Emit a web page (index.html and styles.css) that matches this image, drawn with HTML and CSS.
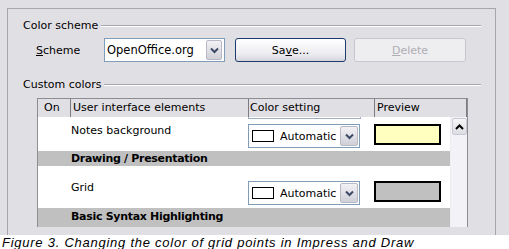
FILE: index.html
```html
<!DOCTYPE html>
<html lang="en">
<head>
  <meta charset="UTF-8" />
  <title>Options - Appearance</title>
  <link rel="stylesheet" href="styles.css">
</head>
<body>

  <div class="dialog">
    <div class="frame">

      <!-- Color scheme -->
      <div class="legend"><span>Color scheme</span><span class="rule"></span></div>
      <div class="scheme-row">
        <label class="lbl"><u>S</u>cheme</label>
        <div class="combo">
          <span class="combo-text">OpenOffice.org</span>
          <span class="drop">
            <svg width="11" height="7" viewBox="0 0 11 7"><polyline points="2,1.5 5.5,5 9,1.5" fill="none" stroke="#3c4a66" stroke-width="2"/></svg>
          </span>
        </div>
        <button class="btn">Sa<u>v</u>e...</button>
        <button class="btn disabled"><u>D</u>elete</button>
      </div>

      <!-- Custom colors -->
      <div class="legend"><span>Custom colors</span><span class="rule"></span></div>
      <div class="table">
        <div class="thead">
          <div class="th th-on">On</div>
          <div class="th th-name">User interface elements</div>
          <div class="th th-color">Color setting</div>
          <div class="th th-preview">Preview</div>
        </div>
        <div class="tbody">
          <div class="rows">
            <div class="peek"><span></span></div>

            <div class="row first">
              <div></div>
              <div class="name">Notes background</div>
              <div class="colorbox">
                <span class="swatch"></span>
                <span class="auto">Automatic</span>
                <span class="drop small">
                  <svg width="11" height="7" viewBox="0 0 11 7"><polyline points="2,1.5 5.5,5 9,1.5" fill="none" stroke="#3c4a66" stroke-width="2"/></svg>
                </span>
              </div>
              <div class="preview yellow"></div>
            </div>

            <div class="section">Drawing / Presentation</div>

            <div class="row">
              <div></div>
              <div class="name">Grid</div>
              <div class="colorbox">
                <span class="swatch"></span>
                <span class="auto">Automatic</span>
                <span class="drop small">
                  <svg width="11" height="7" viewBox="0 0 11 7"><polyline points="2,1.5 5.5,5 9,1.5" fill="none" stroke="#3c4a66" stroke-width="2"/></svg>
                </span>
              </div>
              <div class="preview grey"></div>
            </div>

            <div class="section tall">Basic Syntax Highlighting</div>
          </div>

          <div class="scrollbar">
            <div class="sb-up">
              <svg width="9" height="6" viewBox="0 0 9 6"><polyline points="1,5 4.5,1.5 8,5" fill="none" stroke="#000" stroke-width="2"/></svg>
            </div>
          </div>
        </div>
      </div>

    </div>
  </div>

  <p class="caption">Figure 3. Changing the color of grid points in Impress and Draw</p>

</body>
</html>
```

FILE: styles.css
```css
body {
  margin: 0;
  background: white;
  font-family: "DejaVu Sans", sans-serif;
  font-size: 11px;
  color: #000;
}

.dialog {
  height: 227px;
  background: #e0dfe3;
  padding: 8px 13px 0 7px;
  overflow: hidden;
}

.frame {
  border: 1px solid #a7a6aa;
  border-bottom: none;
  height: 240px;
  padding: 0 14px 0 15px;
}

.legend {
  display: flex;
  align-items: center;
  gap: 3px;
  height: 14px;
  line-height: 14px;
  margin-top: 10px;
}

.legend .rule {
  flex: 1;
  border-top: 1px solid #a7a6aa;
  border-bottom: 1px solid #fff;
  margin-top: -1px;
}

.scheme-row {
  display: flex;
  align-items: center;
  height: 24px;
  margin-top: 5px;
  margin-bottom: 16px;
}

.lbl {
  width: 68px;
  margin-left: 13px;
}

.combo {
  box-sizing: border-box;
  width: 121px;
  height: 24px;
  border: 1px solid #7f9db9;
  background: white;
  display: flex;
  align-items: center;
  padding: 0 2px 0 2px;
}

.combo-text {
  flex: 1;
  font-size: 11.5px;
}

.drop {
  box-sizing: border-box;
  width: 16px;
  height: 20px;
  border: 1px solid #b9b8c6;
  border-radius: 2px;
  background: linear-gradient(#f2f2f5, #cfcfd8);
  display: flex;
  align-items: center;
  justify-content: center;
}

.btn {
  box-sizing: border-box;
  height: 24px;
  width: 111px;
  margin-left: 10px;
  border: 1px solid #1c3a6e;
  border-radius: 3px;
  background: linear-gradient(#ffffff, #ecebf0 70%, #d6d5dd);
  font-family: "DejaVu Sans", sans-serif;
  font-size: 11px;
  color: #000;
  padding: 0;
}

.btn.disabled {
  width: 112px;
  margin-left: 8px;
  border-color: #c9c8d0;
  background: #eeedf0;
  color: #aeadb5;
}

.table {
  box-sizing: border-box;
  width: 431px;
  margin: 6px 0 0 14px;
  border: 1px solid #8d8c92;
  border-bottom: none;
}

.thead {
  display: flex;
  height: 18px;
  line-height: 18px;
  background: #e0dfe3;
}

.th {
  box-sizing: border-box;
  border-right: 1px solid #7c7b80;
  white-space: nowrap;
}

.th-on { width: 33px; padding-left: 6px; }
.th-name { width: 178px; padding-left: 2px; }
.th-color { width: 126px; padding-left: 1px; }
.th-preview { width: 92px; padding-left: 2px; }

.tbody {
  display: flex;
  height: 110px;
  overflow: hidden;
}

.rows {
  width: 412px;
  background: white;
}

.peek {
  height: 3px;
  padding-left: 210px;
}

.peek span {
  display: block;
  box-sizing: border-box;
  width: 113px;
  height: 2px;
  border: 1px solid #9fb0c6;
  border-top: none;
}

.row {
  display: grid;
  grid-template-columns: 33px 177px 126px 76px;
  align-items: start;
  height: 42px;
  padding-top: 15px;
  box-sizing: border-box;
}

.row.first {
  margin-top: -11px;
}

.name {
  line-height: 14px;
}

.colorbox {
  box-sizing: border-box;
  width: 112px;
  height: 24px;
  border: 1px solid #7f9db9;
  background: white;
  display: flex;
  align-items: center;
  padding: 0 1px 0 3px;
}

.swatch {
  box-sizing: border-box;
  width: 22px;
  height: 12px;
  border: 1px solid #000;
  background: white;
}

.auto {
  flex: 1;
  font-size: 11px;
  margin-left: 6px;
}

.drop.small {
  width: 18px;
}

.preview {
  box-sizing: border-box;
  width: 67px;
  height: 21px;
  border: 2px solid #000;
}

.yellow { background: #ffffc0; }
.grey { background: #c0c0c0; }

.section {
  height: 15px;
  line-height: 15px;
  background: #c0c0c0;
  padding-left: 33px;
  font-weight: bold;
  letter-spacing: -0.3px;
}

.section.tall {
  height: 20px;
  line-height: 18px;
}

.scrollbar {
  width: 17px;
  background: #f3f3f7;
  border-left: 1px solid #eeeef2;
  padding: 1px 0 0 1px;
}

.sb-up {
  box-sizing: border-box;
  width: 15px;
  height: 17px;
  border: 1px solid #c9c9d3;
  border-radius: 2px;
  background: linear-gradient(#f6f6f8, #dcdce4);
  display: flex;
  align-items: center;
  justify-content: center;
}

.caption {
  margin: 0;
  padding: 0 0 0 2px;
  line-height: 16px;
  font-family: "Liberation Sans", Arial, sans-serif;
  font-style: italic;
  font-size: 13px;
  letter-spacing: 0.75px;
  color: #000;
}
```
